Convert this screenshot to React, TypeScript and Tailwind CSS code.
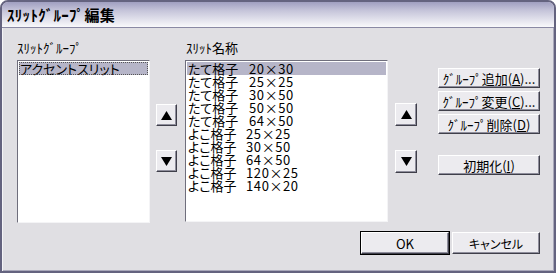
import React from "react";

const groups = ["アクセントスリット"];

const slits: [string, string][] = [
  ["たて格子", "20×30"],
  ["たて格子", "25×25"],
  ["たて格子", "30×50"],
  ["たて格子", "50×50"],
  ["たて格子", "64×50"],
  ["よこ格子", "25×25"],
  ["よこ格子", "30×50"],
  ["よこ格子", "64×50"],
  ["よこ格子", "120×25"],
  ["よこ格子", "140×20"],
];

const raised =
  "bg-[#ecebef] border border-t-white border-l-white border-b-[#3f3f4a] border-r-[#3f3f4a] shadow-[inset_-1px_-1px_0_#8f8e9c]";

function ArrowButton({ up, className = "" }: { up?: boolean; className?: string }) {
  return (
    <button className={`${raised} w-[21px] h-[22px] flex items-center justify-center ${className}`}>
      <svg width="11" height="9" viewBox="0 0 11 9">
        {up ? <polygon points="5.5,0 11,9 0,9" fill="#000" /> : <polygon points="0,0 11,0 5.5,9" fill="#000" />}
      </svg>
    </button>
  );
}

function Btn({ children, className = "" }: { children: React.ReactNode; className?: string }) {
  return (
    <button className={`${raised} w-[102px] h-[20px] flex items-center justify-center text-[13px] leading-[13px] text-black ${className}`}>
      {children}
    </button>
  );
}

export default function App() {
  return (
    <div className="w-[556px] h-[273px] flex flex-col bg-[#e0dfe3] border-2 border-[#64637f] rounded-t-[8px] overflow-hidden font-['Noto_Sans_CJK_JP',sans-serif] [font-feature-settings:'palt'] text-black">
      {/* title bar */}
      <div className="h-[26px] shrink-0 flex items-center pl-[5px] bg-[linear-gradient(to_bottom,#a09fc0,#c6c5da_35%,#f9f9fb)] border-b border-[#8a89a4]">
        <span className="text-[15px] font-bold leading-none tracking-[0.3px]">ｽﾘｯﾄｸﾞﾙｰﾌﾟ編集</span>
      </div>

      <div className="flex-1 flex flex-col pt-[13px] shadow-[inset_1px_0_0_#f4f4f7,inset_-1px_-1px_0_#a9a8ba]">
        <div className="flex items-start pl-[15px]">
          {/* group list */}
          <div className="w-[133px] flex flex-col">
            <div className="h-[13px] text-[13px] leading-[13px] mb-[6px]">ｽﾘｯﾄｸﾞﾙｰﾌﾟ</div>
            <div className="h-[163px] bg-white border border-t-[#6f6e7c] border-l-[#6f6e7c] border-b-[#f4f4f6] border-r-[#f4f4f6] p-[1px]">
              {groups.map((g) => (
                <div key={g} className="h-[13px] text-[13px] leading-[13px] bg-[#b6b5c8] outline outline-1 outline-dotted outline-[#555] -outline-offset-1 pl-[1px]">
                  {g}
                </div>
              ))}
            </div>
          </div>

          <div className="ml-[6px] mt-[63px] flex flex-col">
            <ArrowButton up />
            <ArrowButton className="mt-[24px]" />
          </div>

          {/* slit list */}
          <div className="ml-[8px] w-[203px] flex flex-col">
            <div className="h-[13px] text-[13px] leading-[13px] mb-[6px] pl-[1px]">ｽﾘｯﾄ名称</div>
            <div className="h-[162px] bg-white border border-t-[#6f6e7c] border-l-[#6f6e7c] border-b-[#f4f4f6] border-r-[#f4f4f6] p-[1px]">
              {slits.map(([name, size], i) => (
                <div key={i} className={`h-[13px] flex text-[13px] leading-[13px] pl-[1px] ${i === 0 ? "bg-[#b6b5c8]" : ""}`}>
                  <span className={name === "たて格子" ? "w-[61px]" : "w-[58px]"}>{name}</span>
                  <span className="tracking-[0.6px]">{size}</span>
                </div>
              ))}
            </div>
          </div>

          <div className="ml-[7px] mt-[62px] flex flex-col">
            <ArrowButton up className="w-[22px] h-[23px]" />
            <ArrowButton className="mt-[24px] w-[22px] h-[23px]" />
          </div>

          {/* action buttons */}
          <div className="ml-[21px] mt-[27px] flex flex-col">
            <Btn>
              ｸﾞﾙｰﾌﾟ追加(<span className="underline">A</span>)...
            </Btn>
            <Btn className="mt-[3px]">
              ｸﾞﾙｰﾌﾟ変更(<span className="underline">C</span>)...
            </Btn>
            <Btn className="mt-[3px]">
              ｸﾞﾙｰﾌﾟ削除(<span className="underline">D</span>)
            </Btn>
            <Btn className="mt-[21px]">
              初期化(<span className="underline">I</span>)
            </Btn>
          </div>
        </div>

        <div className="flex items-center justify-end gap-[2px] pr-[14px] mt-[8px]">
          <div className="border border-black">
            <button className={`${raised} w-[88px] h-[22px] text-[13px] leading-[13px] flex items-center justify-center`}>OK</button>
          </div>
          <button className={`${raised} w-[88px] h-[22px] text-[12px] leading-[13px] flex items-center justify-center`}>キャンセル</button>
        </div>
      </div>
    </div>
  );
}
